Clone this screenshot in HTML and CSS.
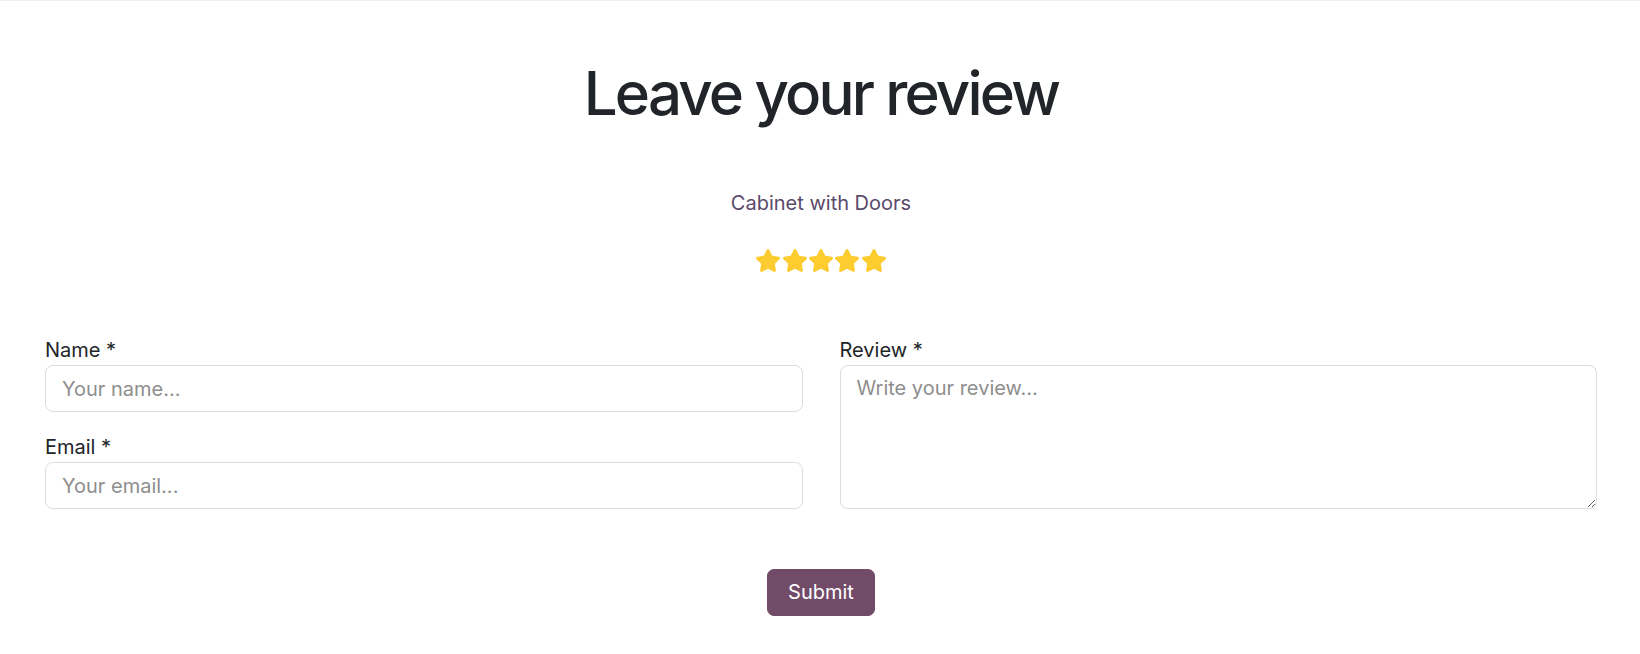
FILE: index.html
```html
<!DOCTYPE html>
<html lang="en">
<head>
<meta charset="utf-8">
<title>Leave your review</title>
<link rel="stylesheet" href="styles.css">
</head>
<body>
<main class="page">
  <h1 class="title">Leave your review</h1>
  <p class="product">Cabinet with Doors</p>
  <div class="stars">
    <svg class="star" viewBox="20 0 536 512"><path d="M259.3 17.8L194 150.2 47.9 171.5c-26.2 3.8-36.7 36.1-17.7 54.6l105.7 103-25 145.5c-4.5 26.3 23.2 46 46.4 33.7L288 439.6l130.7 68.7c23.2 12.2 50.9-7.4 46.4-33.7l-25-145.5 105.7-103c19-18.5 8.5-50.8-17.7-54.6L382 150.2 316.7 17.8c-11.7-23.6-45.6-23.9-57.4 0z"/></svg>
    <svg class="star" viewBox="20 0 536 512"><path d="M259.3 17.8L194 150.2 47.9 171.5c-26.2 3.8-36.7 36.1-17.7 54.6l105.7 103-25 145.5c-4.5 26.3 23.2 46 46.4 33.7L288 439.6l130.7 68.7c23.2 12.2 50.9-7.4 46.4-33.7l-25-145.5 105.7-103c19-18.5 8.5-50.8-17.7-54.6L382 150.2 316.7 17.8c-11.7-23.6-45.6-23.9-57.4 0z"/></svg>
    <svg class="star" viewBox="20 0 536 512"><path d="M259.3 17.8L194 150.2 47.9 171.5c-26.2 3.8-36.7 36.1-17.7 54.6l105.7 103-25 145.5c-4.5 26.3 23.2 46 46.4 33.7L288 439.6l130.7 68.7c23.2 12.2 50.9-7.4 46.4-33.7l-25-145.5 105.7-103c19-18.5 8.5-50.8-17.7-54.6L382 150.2 316.7 17.8c-11.7-23.6-45.6-23.9-57.4 0z"/></svg>
    <svg class="star" viewBox="20 0 536 512"><path d="M259.3 17.8L194 150.2 47.9 171.5c-26.2 3.8-36.7 36.1-17.7 54.6l105.7 103-25 145.5c-4.5 26.3 23.2 46 46.4 33.7L288 439.6l130.7 68.7c23.2 12.2 50.9-7.4 46.4-33.7l-25-145.5 105.7-103c19-18.5 8.5-50.8-17.7-54.6L382 150.2 316.7 17.8c-11.7-23.6-45.6-23.9-57.4 0z"/></svg>
    <svg class="star" viewBox="20 0 536 512"><path d="M259.3 17.8L194 150.2 47.9 171.5c-26.2 3.8-36.7 36.1-17.7 54.6l105.7 103-25 145.5c-4.5 26.3 23.2 46 46.4 33.7L288 439.6l130.7 68.7c23.2 12.2 50.9-7.4 46.4-33.7l-25-145.5 105.7-103c19-18.5 8.5-50.8-17.7-54.6L382 150.2 316.7 17.8c-11.7-23.6-45.6-23.9-57.4 0z"/></svg>
  </div>
  <form class="review-form">
    <div class="fields">
      <div class="col">
        <label class="label" for="name">Name *</label>
        <input class="control" id="name" type="text" placeholder="Your name...">
        <label class="label label-next" for="email">Email *</label>
        <input class="control" id="email" type="email" placeholder="Your email...">
      </div>
      <div class="col">
        <label class="label" for="review">Review *</label>
        <textarea class="control area" id="review" placeholder="Write your review..."></textarea>
      </div>
    </div>
    <div class="actions">
      <button class="submit" type="button">Submit</button>
    </div>
  </form>
</main>
</body>
</html>
```

FILE: styles.css
```css
html, body {
  margin: 0;
  padding: 0;
  background: #ffffff;
}

body {
  font-family: Inter, "Noto Sans", "Liberation Sans", sans-serif;
  color: #212529;
  border-top: 1px solid #f1f1f1;
}

.page {
  padding: 56px 43px 0 45px;
  display: flex;
  flex-direction: column;
  align-items: stretch;
}

.title {
  margin: 0;
  font-size: 60px;
  font-weight: 500;
  line-height: 72px;
  text-align: center;
  color: #212529;
  letter-spacing: -2.8px;
}

.product {
  margin: 59px 0 0;
  font-size: 20px;
  line-height: 30px;
  text-align: center;
  color: #5a4a6b;
}

.stars {
  margin-top: 31px;
  display: flex;
  justify-content: center;
  gap: 2.4px;
}

.star {
  width: 24px;
  height: 23px;
  fill: #fdcc2f;
}

.review-form {
  margin-top: 63px;
}

.fields {
  display: grid;
  grid-template-columns: 1fr 1fr;
  column-gap: 37px;
}

.col {
  display: flex;
  flex-direction: column;
}

.label {
  font-size: 20px;
  line-height: 30px;
  color: #212529;
}

.label-next {
  margin-top: 20px;
}

.control {
  box-sizing: border-box;
  font-family: inherit;
  font-size: 20px;
  line-height: 29px;
  padding: 8px 16px;
  border: 1px solid #dcdcdc;
  border-radius: 8px;
  color: #212529;
  background: #ffffff;
  outline: none;
  width: 100%;
  height: 47px;
  margin: 0;
}

.control::placeholder {
  color: #8e8e8e;
}

.area {
  height: 144px;
  resize: both;
}

.actions {
  display: flex;
  justify-content: center;
  margin-top: 60px;
}

.submit {
  font-family: inherit;
  font-size: 20px;
  line-height: 29px;
  padding: 8px 20px;
  border: 1px solid #714b67;
  border-radius: 7px;
  background: #714b67;
  color: #ffffff;
  cursor: pointer;
}
```
